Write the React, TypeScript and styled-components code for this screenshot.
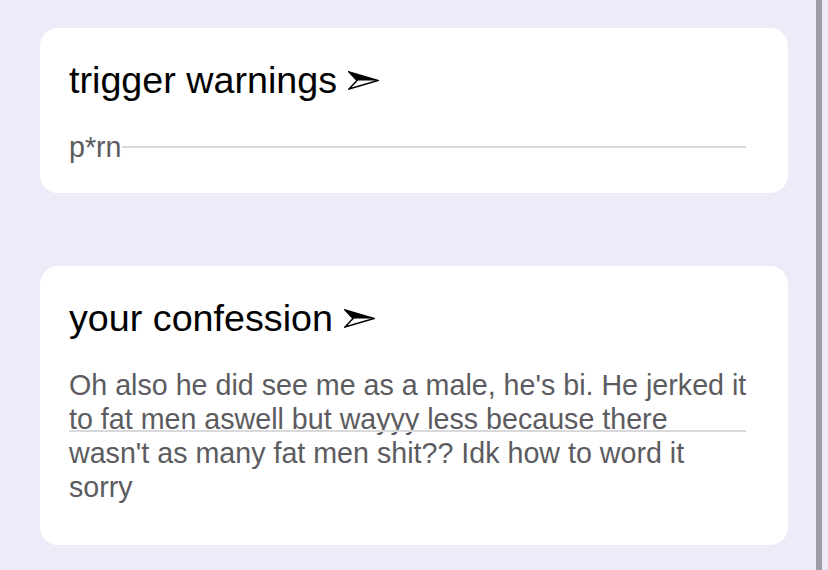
import styled, { createGlobalStyle } from 'styled-components';

const GlobalStyle = createGlobalStyle`
	html, body {
		margin: 0;
		padding: 0;
		background: #eeeaf8;
	}
	body {
		font-family: 'Liberation Sans', Arial, Helvetica, sans-serif;
		-webkit-font-smoothing: antialiased;
	}
`;

const PageStyled = styled.div`
	display: flex;
	width: 828px;
	height: 570px;
	overflow: hidden;
	background: #eeeaf8;
`;

const ColumnStyled = styled.main`
	flex: 1;
	display: flex;
	flex-direction: column;
	gap: 73px;
	padding: 28px 28px 0 40px;
`;

const ScrollEdge = styled.div`
	width: 6px;
	margin-right: 6px;
	background: #9e9aa6;
`;

const CardStyled = styled.section<{ $height: number }>`
	box-sizing: border-box;
	height: ${p => p.$height}px;
	background: #ffffff;
	border-radius: 18px;
	padding: 30px 34px 0 29px;
`;

const Title = styled.h2`
	display: flex;
	align-items: center;
	gap: 11px;
	margin: 0;
	font-size: 37.7px;
	font-weight: 400;
	line-height: 44px;
	color: #000000;
`;

const Field = styled.div`
	position: relative;
	margin-top: 28px;
	font-size: 28.65px;
	line-height: 34px;
	color: #5c5c60;
`;

const Rule = styled.div<{ $top: number; $left?: number }>`
	position: absolute;
	top: ${p => p.$top}px;
	left: ${p => p.$left ?? 0}px;
	right: 8px;
	height: 2px;
	background: #d9d9dc;
`;

const Arrow = () => (
	<svg width='31' height='19' viewBox='0 0 31 19' aria-hidden>
		<polygon points='1,1 30,9.5 9,9.5' fill='#000' />
		<polygon
			points='1,1 30,9.5 1,18 9,9.5'
			fill='none'
			stroke='#000'
			strokeWidth='1.5'
			strokeLinejoin='miter'
		/>
	</svg>
);

export default function App() {
	return (
		<>
			<GlobalStyle />
			<PageStyled>
				<ColumnStyled>
					<CardStyled $height={165}>
						<Title>
							trigger warnings <Arrow />
						</Title>
						<Field>
							p*rn
							<Rule $top={16} $left={53} />
						</Field>
					</CardStyled>

					<CardStyled $height={279}>
						<Title>
							your confession <Arrow />
						</Title>
						<Field>
							Oh also he did see me as a male, he's bi. He jerked it to fat men aswell but wayyy less
							because there wasn't as many fat men shit?? Idk how to word it sorry
							<Rule $top={62} />
						</Field>
					</CardStyled>
				</ColumnStyled>
				<ScrollEdge />
			</PageStyled>
		</>
	);
}
